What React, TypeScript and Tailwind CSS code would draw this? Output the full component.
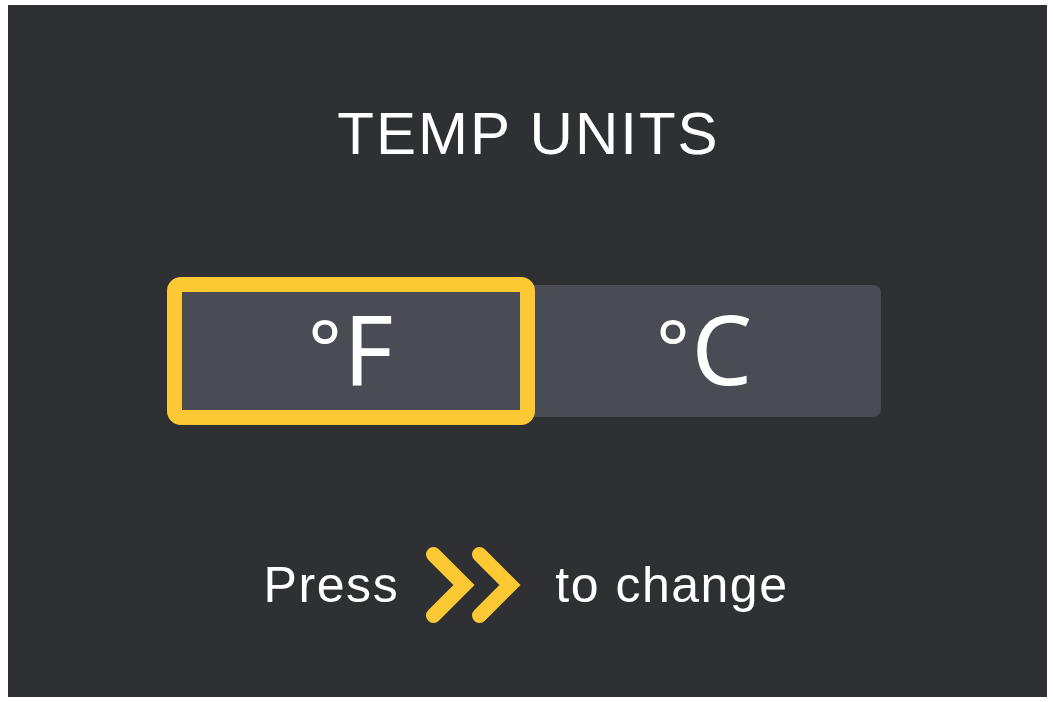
import React, { useState } from 'react';

type Unit = 'F' | 'C';

// Double chevron "next" key glyph
const NextKey = () => (
  <svg width="100" height="80" viewBox="0 0 100 80" className="shrink-0">
    <g fill="none" stroke="#fcc934" strokeWidth="15" strokeLinecap="round" strokeLinejoin="miter">
      <path d="M9.5 9.5 L40 40 L9.5 70.5" />
      <path d="M55.5 9.5 L86 40 L55.5 70.5" />
    </g>
  </svg>
);

const Segment = ({ unit, active, onClick }: { unit: Unit; active: boolean; onClick: () => void }) => (
  <button onClick={onClick} className="relative flex-1 flex items-center justify-center">
    {active && (
      <div className="absolute -inset-y-[8px] -inset-x-[7px] border-[15px] border-[#fcc934] rounded-[14px] pointer-events-none"></div>
    )}
    <span
      className="text-[96px] leading-none text-white mb-[6px]"
      style={{ fontFamily: '"Noto Sans", "Open Sans", sans-serif' }}
    >
      <span className="relative -top-[8px] text-[78px] mr-[2px]">°</span>
      {unit}
    </span>
  </button>
);

const App: React.FC = () => {
  const [unit, setUnit] = useState<Unit>('F');

  return (
    <div className="w-[1053px] h-[702px] bg-white pt-[5px] pl-[8px] pr-[6px] pb-[5px]">
      <div
        className="h-full bg-[#2f3034] flex flex-col items-center text-white"
        style={{ fontFamily: '"Liberation Sans", Arial, sans-serif' }}
      >
        <h1 className="mt-[99px] text-[60px] leading-[60px] tracking-[2px] pl-[2px]">TEMP UNITS</h1>

        <div className="mt-[121px] w-[707px] h-[132px] bg-[#4a4c54] rounded-lg flex">
          <Segment unit="F" active={unit === 'F'} onClick={() => setUnit('F')} />
          <Segment unit="C" active={unit === 'C'} onClick={() => setUnit('C')} />
        </div>

        <div className="mt-[128px] flex items-center pr-[3px]">
          <span className="text-[50px] leading-[50px] tracking-[1.6px] mr-[25px]">Press</span>
          <NextKey />
          <span className="text-[50px] leading-[50px] tracking-[1.5px] ml-[31px]">to change</span>
        </div>
      </div>
    </div>
  );
};

export default App;
